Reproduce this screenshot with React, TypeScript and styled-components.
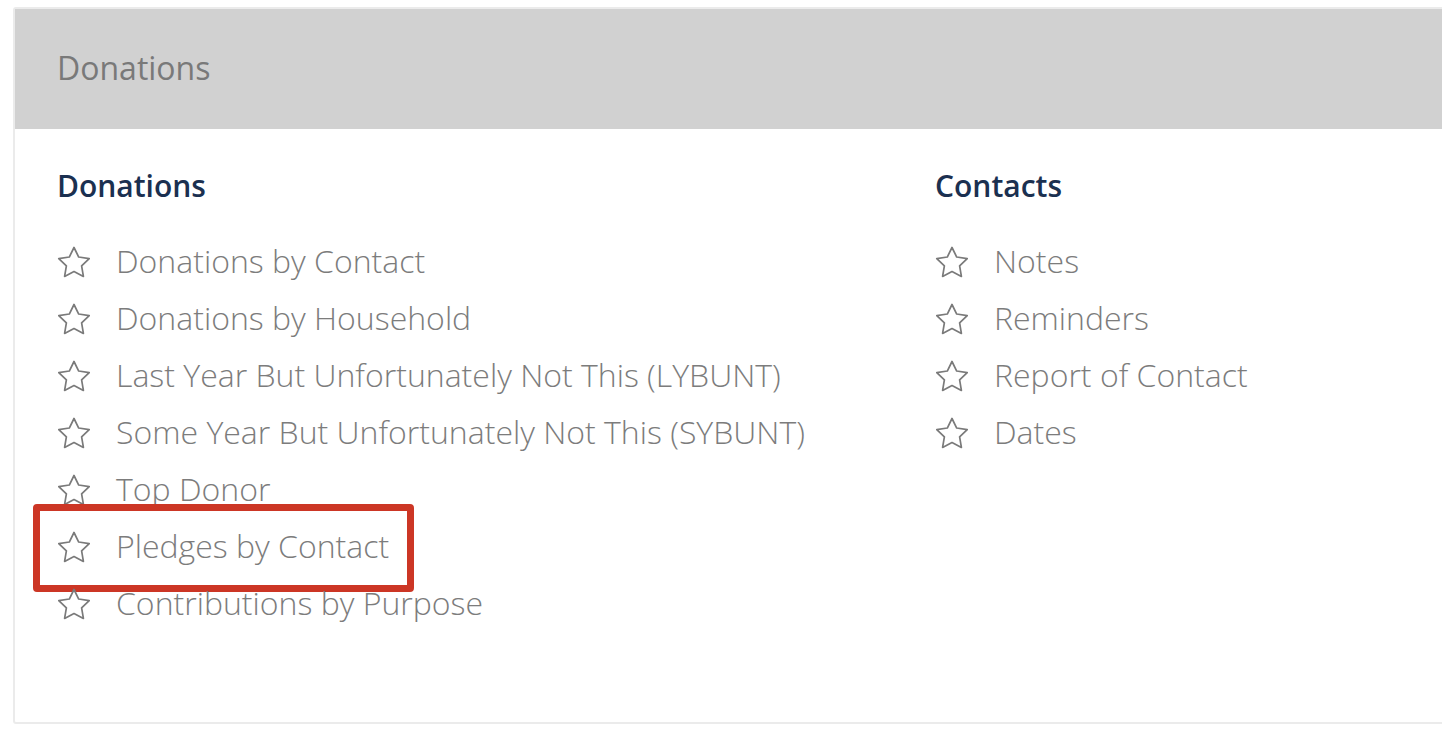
import React from "react";
import styled, { createGlobalStyle } from "styled-components";

const GlobalStyle = createGlobalStyle`
  html, body {
    margin: 0;
    padding: 0;
    background: #ffffff;
    overflow: hidden;
  }
  body {
    font-family: "Open Sans", "Liberation Sans", sans-serif;
  }
`;

const Page = styled.div`
  padding: 7px 0 0 13px;
  width: 1600px;
`;

const Card = styled.section`
  width: 1540px;
  border: 2px solid #ebebeb;
  border-radius: 3px;
  background: #ffffff;
`;

const CardHeader = styled.header`
  height: 120px;
  background: #d1d1d1;
  display: flex;
  align-items: center;
  padding-left: 42px;
  padding-bottom: 3px;
  box-sizing: border-box;
`;

const CardTitle = styled.h1`
  margin: 0;
  font-size: 32px;
  font-weight: 400;
  color: #797979;
`;

const CardBody = styled.div`
  display: grid;
  grid-template-columns: 878px 1fr;
  padding: 38px 0 89px 42px;
`;

const Column = styled.div`
  display: flex;
  flex-direction: column;
`;

const SectionTitle = styled.h2`
  margin: 0 0 29px 0;
  font-size: 30px;
  line-height: 38px;
  font-weight: 600;
  color: #1b3050;
`;

const List = styled.ul`
  list-style: none;
  margin: 0;
  padding: 0;
`;

const Item = styled.li`
  position: relative;
  display: flex;
  align-items: center;
  height: 57px;
  gap: 25px;
`;

const Label = styled.span`
  font-size: 32px;
  line-height: 40px;
  font-weight: 300;
  color: #7c7c7c;
  white-space: nowrap;
  margin-top: -3px;
`;

const Highlight = styled.span`
  position: absolute;
  left: -24px;
  top: -15px;
  width: 381px;
  height: 88px;
  box-sizing: border-box;
  border: 7px solid #cc3625;
  border-radius: 4px;
  pointer-events: none;
`;

const StarIcon = styled.svg`
  flex: 0 0 auto;
  width: 34px;
  height: 33px;
`;

const Star = () => (
  <StarIcon viewBox="0 0 34 33" fill="none">
    <polygon
      points="17,1.5 21.7,11.03 32.22,12.56 24.61,19.97 26.4,30.44 17,25.5 7.6,30.44 9.39,19.97 1.78,12.56 12.3,11.03"
      stroke="#7a7a7a"
      strokeWidth="1.7"
      strokeLinejoin="round"
    />
  </StarIcon>
);

type Report = { label: string; highlighted?: boolean };

const donations: Report[] = [
  { label: "Donations by Contact" },
  { label: "Donations by Household" },
  { label: "Last Year But Unfortunately Not This (LYBUNT)" },
  { label: "Some Year But Unfortunately Not This (SYBUNT)" },
  { label: "Top Donor" },
  { label: "Pledges by Contact", highlighted: true },
  { label: "Contributions by Purpose" },
];

const contacts: Report[] = [
  { label: "Notes" },
  { label: "Reminders" },
  { label: "Report of Contact" },
  { label: "Dates" },
];

const ReportColumn = ({ title, items }: { title: string; items: Report[] }) => (
  <Column>
    <SectionTitle>{title}</SectionTitle>
    <List>
      {items.map((it) => (
        <Item key={it.label}>
          <Star />
          <Label>{it.label}</Label>
          {it.highlighted && <Highlight />}
        </Item>
      ))}
    </List>
  </Column>
);

export default function App() {
  return (
    <>
      <GlobalStyle />
      <Page>
        <Card>
          <CardHeader>
            <CardTitle>Donations</CardTitle>
          </CardHeader>
          <CardBody>
            <ReportColumn title="Donations" items={donations} />
            <ReportColumn title="Contacts" items={contacts} />
          </CardBody>
        </Card>
      </Page>
    </>
  );
}
